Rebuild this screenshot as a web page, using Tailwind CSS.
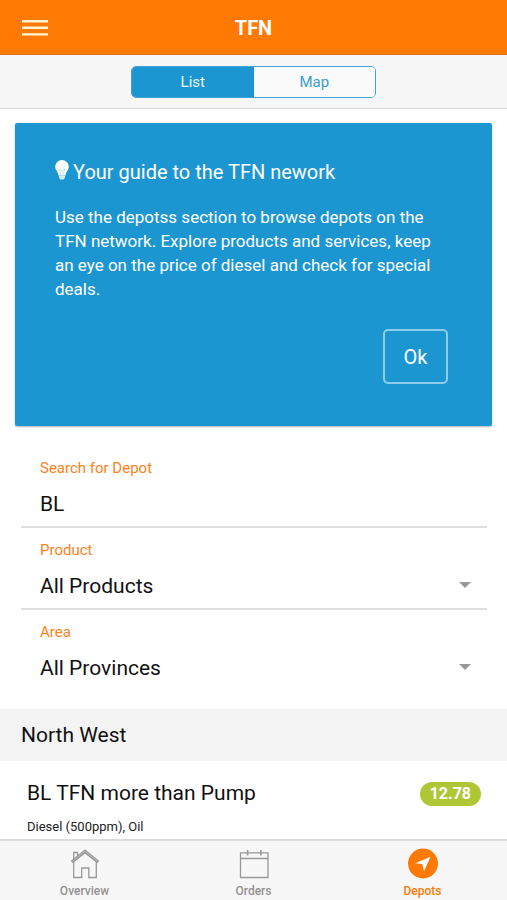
<!DOCTYPE html>
<html lang="en">
<head>
<meta charset="utf-8">
<meta name="viewport" content="width=device-width, initial-scale=1">
<title>TFN</title>
<script src="https://cdn.jsdelivr.net/npm/@tailwindcss/browser@4"></script>
</head>
<body class="flex h-screen flex-col overflow-hidden bg-white font-['Roboto',sans-serif] text-black">
  <header class="grid h-[55px] shrink-0 grid-cols-[1fr_auto_1fr] items-center border-b border-[#d9731a] bg-[#ff7a05] px-[22px] pt-[2px] text-white">
    <button type="button" aria-label="Menu" class="w-[26px]">
      <svg class="block h-4 w-[26px]" viewBox="0 0 26 16" fill="#fff3d6" aria-hidden="true"><path d="M0 0h26v2.4H0zM0 6.6h26V9H0zM0 13.2h26v2.4H0z"/></svg>
    </button>
    <h1 class="text-xl font-bold">TFN</h1>
  </header>

  <div class="flex h-[54px] shrink-0 items-center justify-center border-b border-[#d4d4d4] bg-[#f7f7f7]">
    <div class="grid h-8 w-[245px] grid-cols-2 overflow-hidden rounded-[5px] border border-[#3fa3d4] text-[15px]">
      <button type="button" aria-pressed="true" class="bg-[#1c96d1] pt-[2px] text-[#e6f6fd]">List</button>
      <button type="button" aria-pressed="false" class="bg-[#fafafa] pt-[2px] text-[#3a9fd2]">Map</button>
    </div>
  </div>

  <main class="min-h-0 flex-1 overflow-hidden">
    <section class="mx-[15px] mt-[14px] rounded-xs bg-[#1c96d1] pt-[35px] pr-11 pb-[42px] pl-10 text-white shadow-[0_1px_2px_rgba(0,0,0,0.3)]">
      <h2 class="flex items-center gap-1 text-xl leading-7">
        <svg class="-mt-1 h-5 w-[14px]" viewBox="0 0 14 20" aria-hidden="true">
          <path fill="#fff" d="M7 0a6.800 6.800 0 0 0-6.800 6.800c0 2.300 1.200 3.700 2.200 5.300.7 1.200.9 2.300 1.100 3.400h7c.2-1.100.4-2.200 1.100-3.400 1-1.600 2.200-3 2.200-5.300A6.800 6.800 0 0 0 7 0z"/>
          <path fill="#d3ecf8" d="M3.700 15.500h6.600l-.4 2.200-1.200 1.800H5.300l-1.200-1.800z"/>
          <path fill="none" stroke="#b5dcf0" stroke-width=".8" d="M4.200 8.500l1.800 6.500M9.800 8.500L8 15M5.500 9L7 11.500 8.500 9"/>
        </svg>
        Your guide to the TFN nework
      </h2>
      <p class="mt-[19px] text-[17px] leading-6">Use the depotss section to browse depots on the TFN network. Explore products and services, keep an eye on the price of diesel and check for special deals.</p>
      <div class="mt-7 flex justify-end">
        <button type="button" class="h-[55px] w-[65px] rounded-[5px] border-2 border-[#8dcdec] text-xl">Ok</button>
      </div>
    </section>

    <form class="mt-5 mr-5 ml-[21px]">
      <div class="border-b-2 border-[#dedede] px-[19px] pt-3 pb-2">
        <label for="search" class="block text-[15px] leading-5 text-[#ff8119]">Search for Depot</label>
        <input id="search" type="text" value="BL" class="mt-3 block h-7 w-full bg-transparent text-[21px] leading-7 text-[#111] outline-none">
      </div>
      <div class="border-b-2 border-[#dedede] pt-3 pr-4 pb-2 pl-[19px]">
        <label for="product" class="block text-[15px] leading-5 text-[#ff8119]">Product</label>
        <div class="mt-3 grid items-center">
          <select id="product" class="col-start-1 row-start-1 h-7 w-full appearance-none bg-transparent text-[21px] leading-7 text-[#111] outline-none"><option>All Products</option></select>
          <svg class="pointer-events-none col-start-1 row-start-1 mb-[2px] h-[6px] w-3 justify-self-end" viewBox="0 0 12 6" aria-hidden="true"><path fill="#999" d="M0 0h12L6 6z"/></svg>
        </div>
      </div>
      <div class="pt-3 pr-4 pb-2 pl-[19px]">
        <label for="area" class="block text-[15px] leading-5 text-[#ff8119]">Area</label>
        <div class="mt-3 grid items-center">
          <select id="area" class="col-start-1 row-start-1 h-7 w-full appearance-none bg-transparent text-[21px] leading-7 text-[#111] outline-none"><option>All Provinces</option></select>
          <svg class="pointer-events-none col-start-1 row-start-1 mb-[2px] h-[6px] w-3 justify-self-end" viewBox="0 0 12 6" aria-hidden="true"><path fill="#999" d="M0 0h12L6 6z"/></svg>
        </div>
      </div>
    </form>

    <section class="mt-[19px] text-[#111]">
      <h2 class="bg-[#f4f4f4] px-[21px] py-3 text-[21px] leading-7">North West</h2>
      <article class="pt-[18px] pr-[26px] pl-[27px]">
        <div class="flex items-center justify-between">
          <h3 class="text-[21px] leading-7">BL TFN more than Pump</h3>
          <span class="mt-[2px] h-6 rounded-full bg-[#b0c735] px-[10px] text-base leading-6 font-bold text-white">12.78</span>
        </div>
        <p class="mt-[10px] text-[13px] leading-5 text-[#222]">Diesel (500ppm), Oil</p>
      </article>
    </section>
  </main>

  <nav class="grid h-[61px] shrink-0 grid-cols-3 border-t-2 border-[#dcdcdc] bg-[#f7f7f7] text-xs leading-4 font-medium text-[#929292]">
    <a href="#overview" class="flex flex-col items-center gap-1 pt-[7px]">
      <svg class="h-[31px] w-[30px]" viewBox="0 0 30 31" fill="none" stroke="#999" stroke-width="1.300" aria-hidden="true">
        <path d="M3.700 13.500V29.500h8V20h7.100v9.500h7.500V13.500L15 4.800z"/>
        <path d="M7.500 7.700V4.500H3.700v6.800M1.600 13L15 2.200 28.400 13l-.9 1.200L15 4.400 2.500 14.200z"/>
      </svg>
      Overview
    </a>
    <a href="#orders" class="flex flex-col items-center gap-1 pt-[7px]">
      <svg class="h-[31px] w-[30px]" viewBox="0 0 30 31" fill="none" stroke="#999" stroke-width="1.300" aria-hidden="true">
        <path d="M1.500 4.800h27.500V29.500H1.500zM1.500 10.500H29"/>
        <path stroke-width="1.600" d="M8.600 2v5.500M21.900 2v5.500"/>
      </svg>
      Orders
    </a>
    <a href="#depots" aria-current="page" class="flex flex-col items-center gap-1 pt-[7px] text-[#ff7a05]">
      <svg class="h-[31px] w-[30px]" viewBox="0 0 30 31" aria-hidden="true">
        <circle cx="15" cy="15.500" r="15" fill="#ff7a05"/>
        <path fill="#fff" d="M22.500 8.700L7.200 15.300l7 .8 1.800 7.200z"/>
      </svg>
      Depots
    </a>
  </nav>
</body>
</html>
